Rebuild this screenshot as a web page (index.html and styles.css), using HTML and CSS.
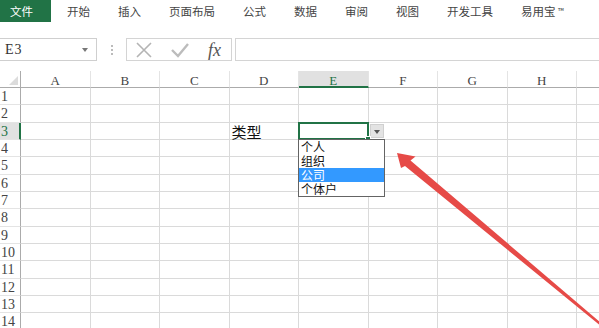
FILE: index.html
```html
<!DOCTYPE html>
<html lang="zh-CN">
<head>
  <meta charset="UTF-8">
  <title>数据验证下拉列表</title>
  <link rel="stylesheet" href="styles.css">
</head>
<body>
  <div class="tabs">
    <span class="file">文件</span>
    <span>开始</span>
    <span>插入</span>
    <span>页面布局</span>
    <span>公式</span>
    <span>数据</span>
    <span>审阅</span>
    <span>视图</span>
    <span>开发工具</span>
    <span>易用宝 <small>™</small></span>
  </div>

  <div class="fbar">
    <div class="namebox">E3<span class="caret"></span></div>
    <div class="dots"><i></i><i></i><i></i></div>
    <div class="fbtns">
      <svg class="ico" width="16" height="16" viewBox="0 0 16 16"><path d="M1 1 L15 15 M15 1 L1 15" stroke="#b4b4b4" stroke-width="1.6" fill="none"/></svg>
      <svg class="ico" width="18" height="16" viewBox="0 0 18 16"><path d="M1 8 L7 14 L17 2" stroke="#bcbcbc" stroke-width="2.4" fill="none"/></svg>
      <span class="fx">fx</span>
    </div>
    <div class="finput"></div>
  </div>

  <div class="sheet">
    <div class="corner"></div>
    <div class="ch">A</div><div class="ch">B</div><div class="ch">C</div><div class="ch">D</div><div class="ch on">E</div><div class="ch">F</div><div class="ch">G</div><div class="ch">H</div><div class="ch"></div>

    <div class="rh">1</div><div></div><div></div><div></div><div></div><div></div><div></div><div></div><div></div><div></div>
    <div class="rh">2</div><div></div><div></div><div></div><div></div><div></div><div></div><div></div><div></div><div></div>
    <div class="rh on">3</div><div></div><div></div><div></div><div class="txt">类型</div>
    <div class="sel">
      <span class="dd-btn"></span>
      <ul class="dd-list">
        <li>个人</li>
        <li>组织</li>
        <li class="hl">公司</li>
        <li>个体户</li>
      </ul>
    </div>
    <div></div><div></div><div></div><div></div>
    <div class="rh">4</div><div></div><div></div><div></div><div></div><div></div><div></div><div></div><div></div><div></div>
    <div class="rh">5</div><div></div><div></div><div></div><div></div><div></div><div></div><div></div><div></div><div></div>
    <div class="rh">6</div><div></div><div></div><div></div><div></div><div></div><div></div><div></div><div></div><div></div>
    <div class="rh">7</div><div></div><div></div><div></div><div></div><div></div><div></div><div></div><div></div><div></div>
    <div class="rh">8</div><div></div><div></div><div></div><div></div><div></div><div></div><div></div><div></div><div></div>
    <div class="rh">9</div><div></div><div></div><div></div><div></div><div></div><div></div><div></div><div></div><div></div>
    <div class="rh">10</div><div></div><div></div><div></div><div></div><div></div><div></div><div></div><div></div><div></div>
    <div class="rh">11</div><div></div><div></div><div></div><div></div><div></div><div></div><div></div><div></div><div></div>
    <div class="rh">12</div><div></div><div></div><div></div><div></div><div></div><div></div><div></div><div></div><div></div>
    <div class="rh">13</div><div></div><div></div><div></div><div></div><div></div><div></div><div></div><div></div><div></div>
    <div class="rh">14</div><div></div><div></div><div></div><div></div><div></div><div></div><div></div><div></div><div></div>
  </div>

  <!-- annotation arrow drawn over the sheet -->
  <svg class="arrow" width="599" height="328" viewBox="0 0 599 328">
    <polygon points="397,153 415.5,156.5 410.5,160.5 600.5,322.5 599.5,325 405,166 401,168" fill="#e64a47"/>
  </svg>
</body>
</html>
```

FILE: styles.css
```css
body {
  margin: 0;
  width: 599px;
  height: 328px;
  overflow: hidden;
  position: relative;
  background: #fff;
  font-family: "Noto Sans CJK SC", sans-serif;
  color: #222;
}

.tabs {
  display: flex;
  align-items: center;
  gap: 28px;
  height: 22px;
  font-size: 11.5px;
  color: #444;
}
.tabs .file {
  width: 51px;
  height: 22px;
  line-height: 22px;
  padding-left: 10px;
  box-sizing: border-box;
  margin-right: -12px;
  background: #217346;
  color: #fff;
}
.tabs small {
  font-size: 8px;
  vertical-align: 2px;
}

.fbar {
  display: flex;
  height: 23px;
  margin-top: 16px;
}
.namebox {
  position: relative;
  width: 97px;
  box-sizing: border-box;
  border: 1px solid #cfcfcf;
  border-left: none;
  padding-left: 5px;
  font-family: "Liberation Serif", serif;
  font-size: 14px;
  line-height: 21px;
  letter-spacing: 1px;
  color: #333;
}
.caret {
  position: absolute;
  right: 8px;
  top: 9px;
  border-left: 3px solid transparent;
  border-right: 3px solid transparent;
  border-top: 4px solid #777;
}
.dots {
  width: 29px;
  display: flex;
  flex-direction: column;
  align-items: center;
  justify-content: center;
  gap: 2px;
}
.dots i {
  width: 2px;
  height: 2px;
  background: #bbb;
}
.fbtns {
  display: flex;
  align-items: center;
  width: 106px;
  box-sizing: border-box;
  border: 1px solid #d4d4d4;
  padding-left: 9px;
}
.fbtns .ico:nth-child(2) {
  margin-left: 19px;
}
.fx {
  margin-left: 19px;
  font-family: "Liberation Serif", serif;
  font-style: italic;
  font-size: 18px;
  line-height: 18px;
  color: #555;
}
.finput {
  flex: 1;
  margin-left: 3px;
  border: 1px solid #d4d4d4;
  border-right: none;
}

.sheet {
  display: grid;
  grid-template-columns: 21px repeat(9, 69.5px);
  grid-template-rows: 17px repeat(14, 17.33px);
  margin-top: 10px;
  width: 646.5px;
}
.sheet > div {
  box-sizing: border-box;
  border-right: 1px solid #dadada;
  border-bottom: 1px solid #dadada;
}
.sheet .corner {
  position: relative;
  border-right: 1px solid #ababab;
  border-bottom: 1px solid #ababab;
}
.corner::after {
  content: "";
  position: absolute;
  right: 2px;
  bottom: 2px;
  border-left: 9px solid transparent;
  border-bottom: 9px solid #dcdcdc;
}
.sheet .ch {
  border-bottom: 1px solid #ababab;
  border-right-color: #e4e4e4;
  text-align: center;
  font-family: "Liberation Serif", serif;
  font-size: 13px;
  line-height: 19px;
  color: #444;
}
.sheet .ch.on {
  background: #e1e1e1;
  color: #217346;
  border-bottom: 2px solid #217346;
}
.sheet .rh {
  border-right: 1px solid #ababab;
  border-bottom-color: #e4e4e4;
  padding-left: 1px;
  font-family: "Liberation Serif", serif;
  font-size: 14px;
  line-height: 18px;
  color: #444;
}
.sheet .rh.on {
  background: #e1e1e1;
  color: #217346;
  border-right: 2px solid #217346;
}
.sheet .txt {
  padding-left: 2px;
  font-size: 15px;
  line-height: 17px;
  color: #111;
}

.sel {
  position: relative;
}
.sel::before {
  content: "";
  position: absolute;
  left: -1px;
  top: -1px;
  right: -1px;
  bottom: -1px;
  border: 2px solid #217346;
}
.sel::after {
  content: "";
  position: absolute;
  right: -3px;
  bottom: -3px;
  width: 4px;
  height: 4px;
  background: #217346;
  border: 1px solid #fff;
}
.dd-btn {
  position: absolute;
  left: calc(100% + 2px);
  top: 1px;
  width: 14px;
  height: 14px;
  background: #e3e3e3;
  border: 1px solid #d0d0d0;
  box-sizing: border-box;
}
.dd-btn::after {
  content: "";
  position: absolute;
  left: 3px;
  top: 5px;
  border-left: 3.5px solid transparent;
  border-right: 3.5px solid transparent;
  border-top: 4px solid #555;
}
.dd-list {
  position: absolute;
  left: -1px;
  top: 100%;
  width: 87px;
  margin: 0;
  padding: 0;
  list-style: none;
  background: #fff;
  border: 1px solid #646464;
  box-sizing: border-box;
  z-index: 2;
}
.dd-list li {
  height: 14px;
  line-height: 14px;
  padding-left: 2px;
  font-size: 12px;
  color: #111;
}
.dd-list li.hl {
  background: #3399ff;
  color: #fff;
}

.arrow {
  position: absolute;
  left: 0;
  top: 0;
  pointer-events: none;
}
```
